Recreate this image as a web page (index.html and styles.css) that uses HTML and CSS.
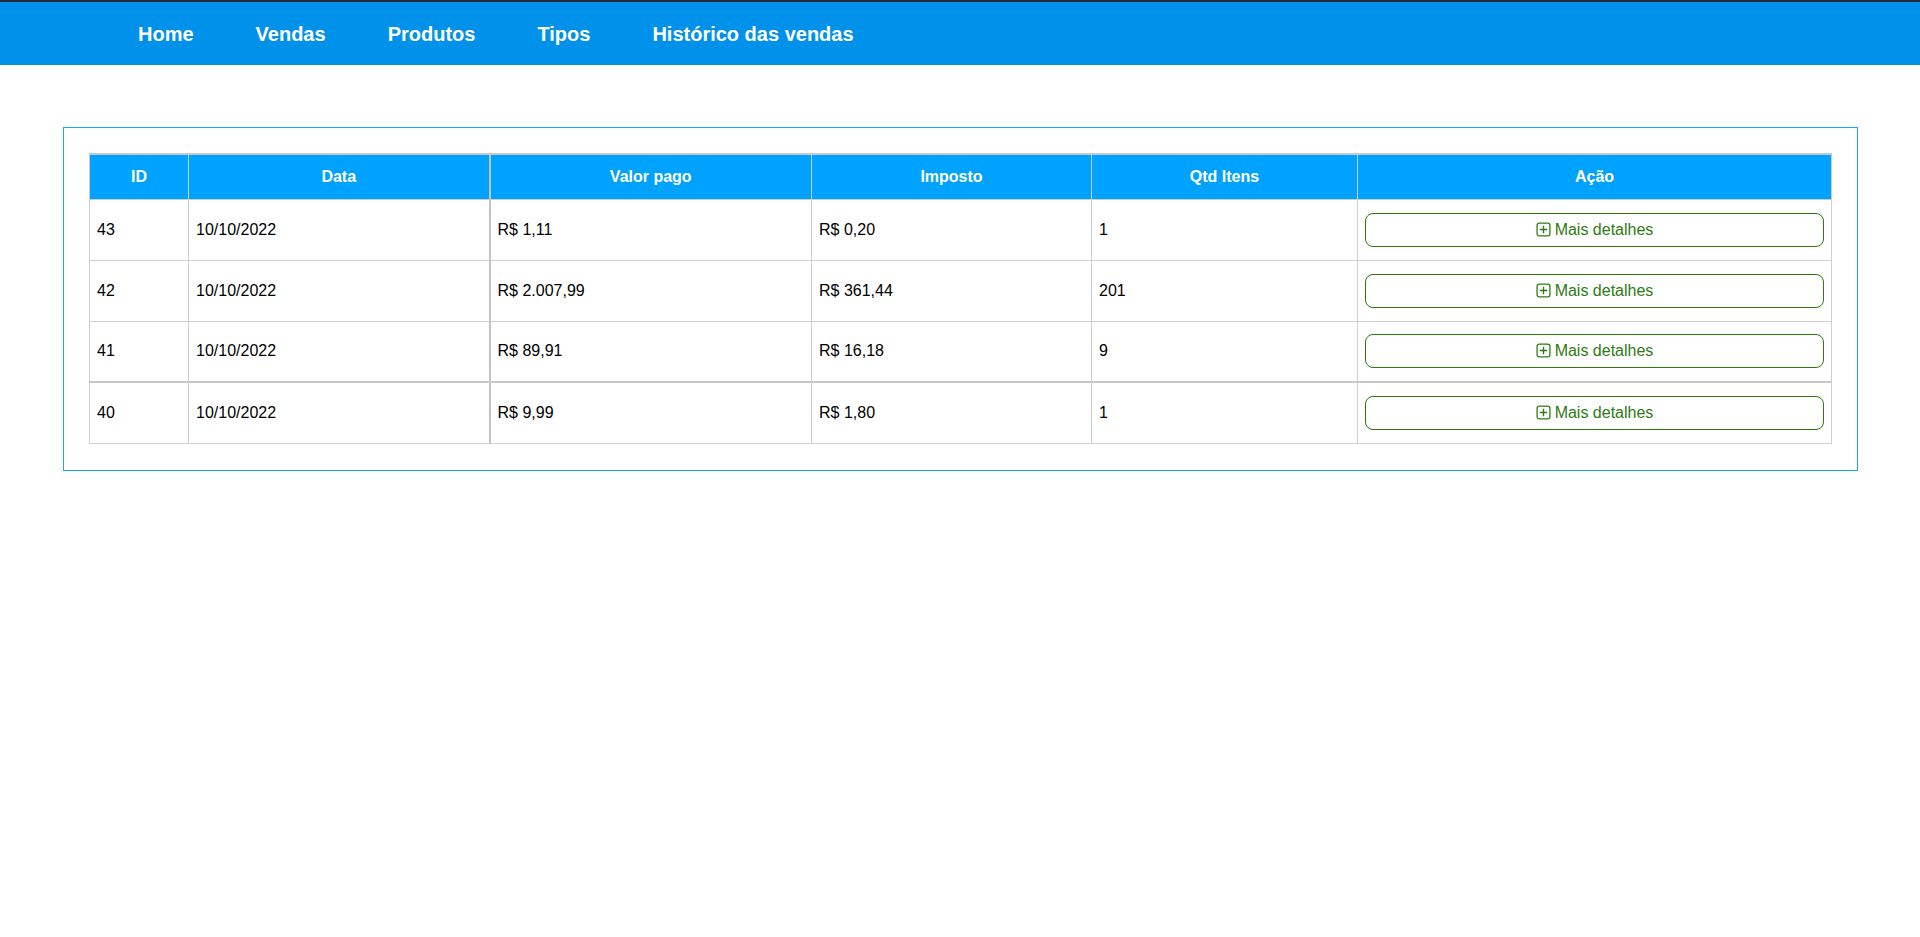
FILE: index.html
```html
<!DOCTYPE html>
<html lang="pt-BR">
<head>
<meta charset="utf-8">
<title>Histórico das vendas</title>
<link rel="stylesheet" href="styles.css">
</head>
<body>
<nav class="topbar">
  <ul class="menu">
    <li><a href="#">Home</a></li>
    <li><a href="#">Vendas</a></li>
    <li><a href="#">Produtos</a></li>
    <li><a href="#">Tipos</a></li>
    <li><a href="#">Histórico das vendas</a></li>
  </ul>
</nav>
<main class="panel">
  <table class="sales">
    <colgroup>
      <col class="c-id"><col class="c-data"><col class="c-valor"><col class="c-imp"><col class="c-qtd"><col class="c-acao">
    </colgroup>
    <thead>
      <tr><th>ID</th><th>Data</th><th class="thick">Valor pago</th><th>Imposto</th><th>Qtd Itens</th><th>Ação</th></tr>
    </thead>
    <tbody>
      <tr><td>43</td><td>10/10/2022</td><td class="thick">R$ 1,11</td><td>R$ 0,20</td><td>1</td><td class="act"><button class="btn"><svg class="ico" viewBox="0 0 14 14" width="14" height="14"><rect x="1" y="1" width="12" height="12" rx="2" fill="none" stroke="currentColor" stroke-width="1.2"/><path d="M7 3.6v6.8M3.6 7h6.8" stroke="currentColor" stroke-width="1.3"/></svg>Mais detalhes</button></td></tr>
      <tr><td>42</td><td>10/10/2022</td><td class="thick">R$ 2.007,99</td><td>R$ 361,44</td><td>201</td><td class="act"><button class="btn"><svg class="ico" viewBox="0 0 14 14" width="14" height="14"><rect x="1" y="1" width="12" height="12" rx="2" fill="none" stroke="currentColor" stroke-width="1.2"/><path d="M7 3.6v6.8M3.6 7h6.8" stroke="currentColor" stroke-width="1.3"/></svg>Mais detalhes</button></td></tr>
      <tr class="sep"><td>41</td><td>10/10/2022</td><td class="thick">R$ 89,91</td><td>R$ 16,18</td><td>9</td><td class="act"><button class="btn"><svg class="ico" viewBox="0 0 14 14" width="14" height="14"><rect x="1" y="1" width="12" height="12" rx="2" fill="none" stroke="currentColor" stroke-width="1.2"/><path d="M7 3.6v6.8M3.6 7h6.8" stroke="currentColor" stroke-width="1.3"/></svg>Mais detalhes</button></td></tr>
      <tr><td>40</td><td>10/10/2022</td><td class="thick">R$ 9,99</td><td>R$ 1,80</td><td>1</td><td class="act"><button class="btn"><svg class="ico" viewBox="0 0 14 14" width="14" height="14"><rect x="1" y="1" width="12" height="12" rx="2" fill="none" stroke="currentColor" stroke-width="1.2"/><path d="M7 3.6v6.8M3.6 7h6.8" stroke="currentColor" stroke-width="1.3"/></svg>Mais detalhes</button></td></tr>
    </tbody>
  </table>
</main>
</body>
</html>
```
FILE: styles.css
```css
* { box-sizing: border-box; }
html, body { margin: 0; padding: 0; background: #fff; }
body { font-family: "Liberation Sans", Arial, sans-serif; color: #000; }

.topbar {
  background: #0091ea;
  border-top: 2px solid #232c36;
  height: 65px;
}
.menu {
  list-style: none;
  margin: 0;
  padding: 0 0 0 107px;
  display: flex;
  height: 63px;
  align-items: center;
}
.menu a {
  display: block;
  padding: 0 31px;
  color: #fff;
  text-decoration: none;
  font-weight: bold;
  font-size: 20px;
  line-height: 24px;
}

.panel {
  margin: 62px 62px 0 63px;
  border: 1px solid #19a4ff;
  padding: 25px 26px 26px 25px;
}

.sales {
  width: 100%;
  border-collapse: collapse;
  table-layout: fixed;
  font-size: 16px;
}
.c-id { width: 99px; }
.c-data { width: 301px; }
.c-valor { width: 322px; }
.c-imp { width: 280px; }
.c-qtd { width: 266px; }
.c-acao { width: 474px; }

.sales th {
  background: #00a2ff;
  color: #fff;
  font-weight: bold;
  text-align: center;
  height: 45px;
  padding: 0 8px;
  border: 1px solid #cccccc;
  border-top: 2px solid #c8c8c8;
}
.sales td {
  height: 61px;
  padding: 0 7px;
  border: 1px solid #d0d0d0;
  vertical-align: middle;
  text-align: left;
}
.sales td.thick, .sales th.thick { border-left: 2px solid #c4c4c4; }
.sales tr.sep td { border-bottom: 2px solid #c8c8c8; }

.btn {
  display: flex;
  align-items: center;
  justify-content: center;
  gap: 4px;
  width: 100%;
  height: 34px;
  background: #fff;
  border: 1px solid #2e7a06;
  border-radius: 8px;
  color: #2f7a12;
  font-family: "Liberation Sans", Arial, sans-serif;
  font-size: 16px;
  padding: 0;
  cursor: pointer;
}
.ico { display: block; width: 15px; height: 15px; margin-top: -1px; }
```
